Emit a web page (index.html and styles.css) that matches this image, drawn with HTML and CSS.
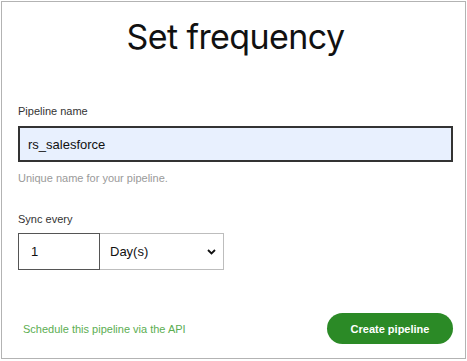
FILE: index.html
```html
<!DOCTYPE html>
<html lang="en">
  <head>
    <meta charset="UTF-8" />
    <title>Set frequency</title>
    <link rel="stylesheet" href="styles.css">
  </head>
  <body>
    <div class="frame">
      <h1>Set frequency</h1>

      <div class="field">
        <label class="field-label">Pipeline name</label>
        <input type="text" class="name-input" value="rs_salesforce" />
        <div class="hint">Unique name for your pipeline.</div>
      </div>

      <div class="field sync">
        <label class="field-label">Sync every</label>
        <div class="sync-row">
          <input type="text" class="num-input" value="1" />
          <div class="unit-select">
            <span>Day(s)</span>
            <svg width="9" height="6" viewBox="0 0 9 6"><path d="M1 1l3.5 3.5L8 1" fill="none" stroke="#111" stroke-width="1.8"/></svg>
          </div>
        </div>
      </div>

      <div class="footer">
        <a class="api-link" href="#">Schedule this pipeline via the API</a>
        <button class="create-btn">Create pipeline</button>
      </div>
    </div>
  </body>
</html>
```

FILE: styles.css
```css
body {
  margin: 0;
  padding: 1px;
  font-family: 'Liberation Sans', Arial, sans-serif;
  background: white;
}

.frame {
  width: 465px;
  height: 358px;
  border: 1px solid #b3b3b3;
  padding: 0 12px 0 16px;
  box-sizing: border-box;
  display: flex;
  flex-direction: column;
}

h1 {
  margin: 14px 0 0;
  text-align: center;
  font-family: Inter, 'Liberation Sans', sans-serif;
  font-weight: 400;
  font-size: 34px;
  letter-spacing: -0.6px;
  line-height: 42px;
  color: #111;
}

.field {
  display: flex;
  flex-direction: column;
}

.field-label {
  margin-top: 46px;
  font-size: 11px;
  line-height: 14px;
  color: #333;
}

.name-input {
  margin-top: 8px;
  height: 36px;
  box-sizing: border-box;
  border: 2px solid #333;
  background: #e8f0fe;
  padding: 0 8px;
  font-family: inherit;
  font-size: 13px;
  color: #111;
  outline: none;
}

.hint {
  margin-top: 9px;
  font-size: 11px;
  line-height: 14px;
  color: #9a9a9a;
}

.sync .field-label {
  margin-top: 27px;
}

.sync-row {
  margin-top: 7px;
  display: flex;
  height: 37px;
}

.num-input {
  width: 82px;
  box-sizing: border-box;
  border: 1px solid #555;
  padding: 0 12px;
  font-family: inherit;
  font-size: 13px;
  color: #111;
  outline: none;
}

.unit-select {
  width: 124px;
  box-sizing: border-box;
  border: 1px solid #bdbdbd;
  border-left: none;
  display: flex;
  align-items: center;
  justify-content: space-between;
  padding: 0 7px 0 10px;
  font-size: 13px;
  color: #111;
}

.footer {
  margin-top: auto;
  margin-bottom: 14px;
  display: flex;
  align-items: center;
  justify-content: space-between;
  padding-left: 5px;
}

.api-link {
  font-size: 11px;
  color: #5cae52;
  text-decoration: none;
}

.create-btn {
  width: 126px;
  height: 31px;
  border: none;
  border-radius: 16px;
  background: #2b8a26;
  color: white;
  font-family: inherit;
  font-weight: bold;
  font-size: 11px;
  cursor: pointer;
}
```
